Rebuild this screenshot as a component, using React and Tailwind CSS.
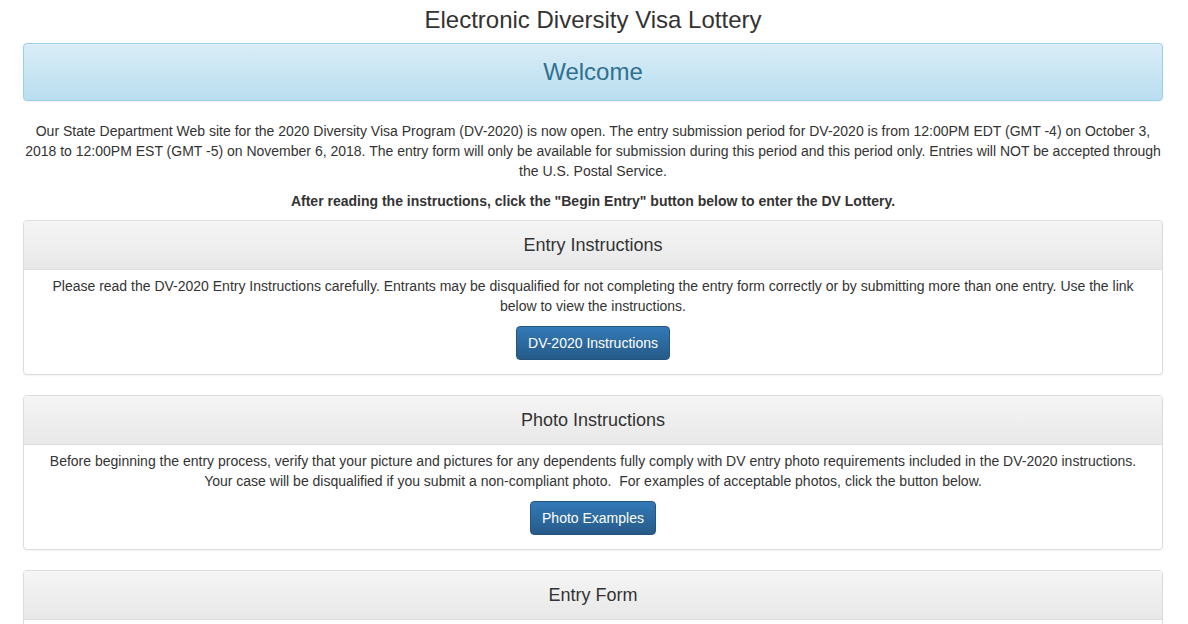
const font = { fontFamily: '"Liberation Sans", Arial, sans-serif' };

function Panel({ title, children }) {
  return (
    <div className="mb-[20px] rounded-[4px] border border-[#dddddd] bg-white shadow-[0_1px_2px_rgba(0,0,0,0.05)]">
      <div className="flex h-[49px] items-center justify-center rounded-t-[3px] border-b border-[#dddddd] bg-gradient-to-b from-[#f5f5f5] to-[#e8e8e8] text-[18px] leading-[20px] text-[#333333]">
        {title}
      </div>
      {children}
    </div>
  );
}

function Button({ children }) {
  return (
    <button className="rounded-[4px] border border-[#245580] bg-gradient-to-b from-[#337ab7] to-[#265a88] px-[11px] py-[6px] text-[14px] leading-[20px] text-white">
      {children}
    </button>
  );
}

export default function App() {
  return (
    <div className="min-h-screen bg-white text-[14px] leading-[20px] text-[#333333]" style={font}>
      <div className="ml-[23px] w-[1140px] pt-[7px]">
        <h1 className="mb-[10px] text-center text-[24px] leading-[26px] text-[#333333]">
          Electronic Diversity Visa Lottery
        </h1>

        <div className="rounded-[4px] border border-[#9acfea] bg-gradient-to-b from-[#d9edf7] to-[#b9def0] py-[15px] text-center text-[24px] leading-[26px] text-[#31708f] shadow-[inset_0_1px_0_rgba(255,255,255,0.25),0_1px_2px_rgba(0,0,0,0.05)]">
          Welcome
        </div>

        <p className="mt-[20px] text-center">
          Our State Department Web site for the 2020 Diversity Visa Program (DV-2020) is now open. The entry submission period for DV-2020 is from 12:00PM EDT (GMT -4) on October 3, 2018 to 12:00PM EST (GMT -5) on November 6, 2018. The entry form will only be available for submission during this period and this period only. Entries will NOT be accepted through the U.S. Postal Service.
        </p>

        <p className="mt-[10px] mb-[9px] text-center font-bold">
          After reading the instructions, click the "Begin Entry" button below to enter the DV Lottery.
        </p>

        <Panel title="Entry Instructions">
          <div className="px-[15px] pt-[6px] pb-[14px] text-center">
            <p>
              Please read the DV-2020 Entry Instructions carefully. Entrants may be disqualified for not completing the entry form correctly or by submitting more than one entry. Use the link below to view the instructions.
            </p>
            <div className="mt-[10px]">
              <Button>DV-2020 Instructions</Button>
            </div>
          </div>
        </Panel>

        <Panel title="Photo Instructions">
          <div className="px-[15px] pt-[6px] pb-[14px] text-center">
            <p>
              Before beginning the entry process, verify that your picture and pictures for any dependents fully comply with DV entry photo requirements included in the DV-2020 instructions. Your case will be disqualified if you submit a non-compliant photo.{'\u00a0 '}For examples of acceptable photos, click the button below.
            </p>
            <div className="mt-[10px]">
              <Button>Photo Examples</Button>
            </div>
          </div>
        </Panel>

        <Panel title="Entry Form">
          <div className="px-[15px] pt-[6px] pb-[14px] text-center">
            <p>
              Click the "Begin Entry" button below to access the DV-2020 Entry Form. You must complete and submit the form before the end of the entry period.
            </p>
            <div className="mt-[10px]">
              <Button>Begin Entry</Button>
            </div>
          </div>
        </Panel>
      </div>
    </div>
  );
}
